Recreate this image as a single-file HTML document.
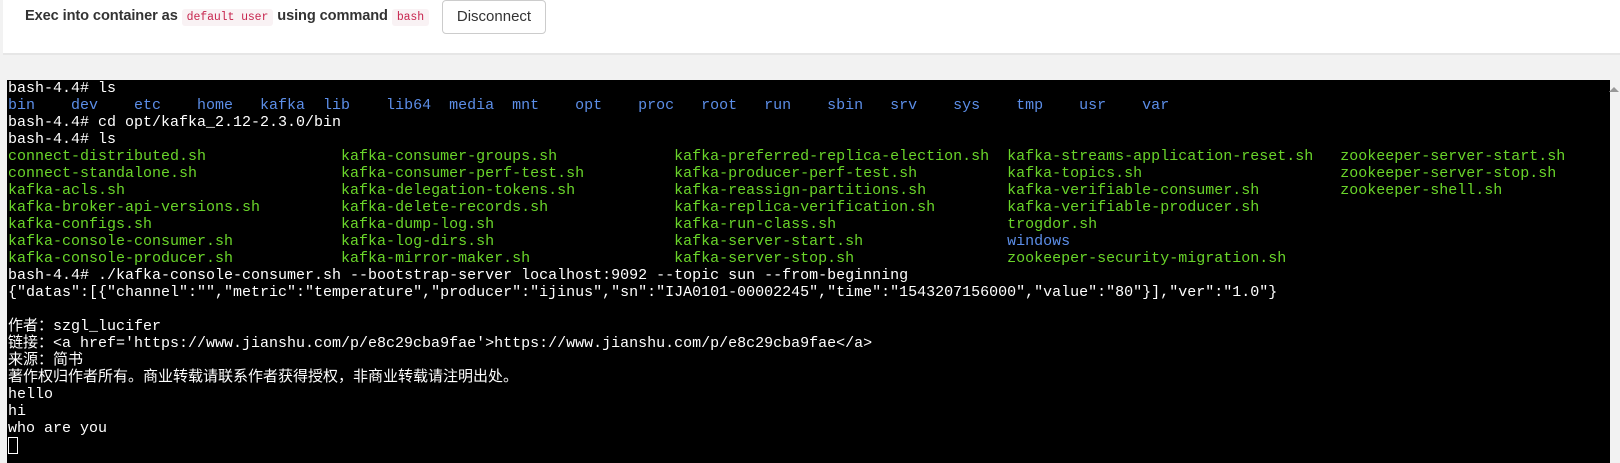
<!DOCTYPE html>
<html><head><meta charset="utf-8"><style>
body{margin:0;width:1620px;height:463px;background:#f2f2f2;overflow:hidden;font-family:"Liberation Sans",sans-serif}
.top{position:absolute;left:3px;top:0;width:1617px;height:53px;background:#fff;border-bottom:2px solid #e6e6e6}
.lbl{position:absolute;left:22px;top:8px;font-size:14.6px;color:#333;font-weight:600;letter-spacing:-0.1px}
code{font-family:"Liberation Mono",monospace;font-size:11.5px;color:#c7254e;background:#f9f2f4;padding:2px 5px;border-radius:3px;font-weight:normal}
.btn{position:absolute;left:439px;top:0;width:104px;height:34px;border:1px solid #ccc;border-radius:4px;background:#fff;font-size:15px;color:#333;text-align:center;line-height:32px;box-sizing:border-box}
.term{position:absolute;left:7px;top:80px;width:1603px;height:383px;background:#000;overflow:hidden}
pre{margin:0;padding:0 0 0 1px;font-family:"Liberation Mono","Noto Sans CJK SC",monospace;font-size:15px;line-height:17px;color:#fff}
.g{color:#6ad52a}.b{color:#5c8ee8}
.arr{position:absolute;left:1609px;top:87px;width:0;height:0;border-left:5px solid transparent;border-right:5px solid transparent;border-bottom:5px solid #999}
.cur{display:inline-block;width:8px;height:15px;border:1px solid #fff;vertical-align:-3px}
</style></head><body>
<div class="top"><div class="lbl">Exec into container as <code>default user</code> using command <code>bash</code></div><div class="btn">Disconnect</div></div>
<div class="term"><pre>bash-4.4# ls
<span class="b">bin    dev    etc    home   kafka  lib    lib64  media  mnt    opt    proc   root   run    sbin   srv    sys    tmp    usr    var</span>
bash-4.4# cd opt/kafka_2.12-2.3.0/bin
bash-4.4# ls
<span class="g">connect-distributed.sh               kafka-consumer-groups.sh             kafka-preferred-replica-election.sh  kafka-streams-application-reset.sh   zookeeper-server-start.sh</span>
<span class="g">connect-standalone.sh                kafka-consumer-perf-test.sh          kafka-producer-perf-test.sh          kafka-topics.sh                      zookeeper-server-stop.sh</span>
<span class="g">kafka-acls.sh                        kafka-delegation-tokens.sh           kafka-reassign-partitions.sh         kafka-verifiable-consumer.sh         zookeeper-shell.sh</span>
<span class="g">kafka-broker-api-versions.sh         kafka-delete-records.sh              kafka-replica-verification.sh        kafka-verifiable-producer.sh</span>
<span class="g">kafka-configs.sh                     kafka-dump-log.sh                    kafka-run-class.sh                   trogdor.sh</span>
<span class="g">kafka-console-consumer.sh            kafka-log-dirs.sh                    kafka-server-start.sh                </span><span class="b">windows</span>
<span class="g">kafka-console-producer.sh            kafka-mirror-maker.sh                kafka-server-stop.sh                 zookeeper-security-migration.sh</span>
bash-4.4# ./kafka-console-consumer.sh --bootstrap-server localhost:9092 --topic sun --from-beginning
{"datas":[{"channel":"","metric":"temperature","producer":"ijinus","sn":"IJA0101-00002245","time":"1543207156000","value":"80"}],"ver":"1.0"}

作者：szgl_lucifer
链接：&lt;a href='https://www.jianshu.com/p/e8c29cba9fae'&gt;https://www.jianshu.com/p/e8c29cba9fae&lt;/a&gt;
来源：简书
著作权归作者所有。商业转载请联系作者获得授权，非商业转载请注明出处。
hello
hi
who are you
<span class="cur"></span></pre></div>
<div class="arr"></div>
</body></html>
